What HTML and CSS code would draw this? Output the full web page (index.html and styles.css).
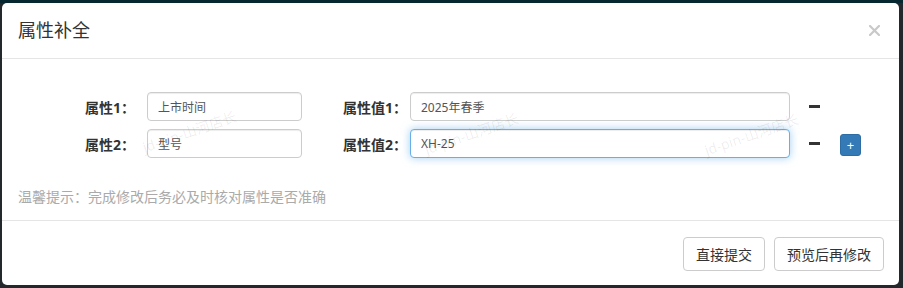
FILE: index.html
```html
<!DOCTYPE html>
<html lang="zh-CN">
<head>
<meta charset="utf-8">
<title>属性补全</title>
<link rel="stylesheet" href="styles.css">
</head>
<body>
<div class="modal">
  <div class="modal-header">
    <h4 class="modal-title">属性补全</h4>
    <button class="close" type="button" aria-label="关闭">
      <svg width="11" height="11" viewBox="0 0 11 11"><path d="M1 1L10 10M10 1L1 10" stroke="#c9c9c9" stroke-width="2.2" stroke-linecap="square"/></svg>
    </button>
  </div>
  <div class="modal-body">
    <div class="rows">
      <div class="row">
        <label class="lbl lbl-key">属性1：</label>
        <input class="input input-key" type="text" value="上市时间">
        <label class="lbl lbl-val">属性值1：</label>
        <input class="input input-val" type="text" value="2025年春季">
        <span class="minus"></span>
      </div>
      <div class="row">
        <label class="lbl lbl-key">属性2：</label>
        <input class="input input-key" type="text" value="型号">
        <label class="lbl lbl-val">属性值2：</label>
        <input class="input input-val focus" type="text" value="XH-25">
        <span class="minus"></span>
        <button class="plus" type="button">+</button>
      </div>
    </div>
    <p class="hint">温馨提示：完成修改后务必及时核对属性是否准确</p>
    <span class="wm wm1">jd-pin-山河店长</span>
    <span class="wm wm2">jd-pin-山河店长</span>
    <span class="wm wm3">jd-pin-山河店长</span>
  </div>
  <div class="modal-footer">
    <button class="btn" type="button">直接提交</button>
    <button class="btn" type="button">预览后再修改</button>
  </div>
</div>
</body>
</html>
```

FILE: styles.css
```css
* { box-sizing: border-box; }
html, body { margin: 0; padding: 0; }
body {
  width: 903px;
  height: 288px;
  overflow: hidden;
  background: linear-gradient(to bottom, #062630 0, #062630 3px, #22282b 3px);
  font-family: "Noto Sans", "Noto Sans CJK SC", sans-serif;
  color: #333;
  padding: 3px 4px 0 2px;
}
.modal {
  width: 897px;
  height: 282px;
  background: #fff;
  border-radius: 5px;
  display: flex;
  flex-direction: column;
  overflow: hidden;
}
.modal-header {
  display: flex;
  align-items: center;
  justify-content: space-between;
  padding: 15px 16px 15px 16px;
  border-bottom: 1px solid #e5e5e5;
}
.modal-title {
  margin: 0;
  font-size: 18px;
  font-weight: 400;
  line-height: 25px;
  color: #333;
}
.close {
  border: 0;
  background: none;
  padding: 0;
  margin-right: 3px;
  display: flex;
  width: 11px;
  height: 11px;
}
.modal-body {
  position: relative;
  flex: 1;
  padding: 33px 16px 0 16px;
}
.rows {
  display: flex;
  flex-direction: column;
  gap: 8px;
}
.row {
  display: flex;
  align-items: center;
  height: 29px;
}
.lbl {
  font-size: 14px;
  font-weight: 700;
  color: #333;
  text-align: right;
}
.lbl-key { width: 129px; padding-right: 12px; }
.lbl-val { width: 108px; padding-right: 3px; }
.input {
  height: 29px;
  border: 1px solid #ccc;
  border-radius: 4px;
  padding: 0 10px;
  font-family: "Noto Sans", "Noto Sans CJK SC", sans-serif;
  font-size: 12px;
  color: #555;
  background: #fff;
  box-shadow: inset 0 1px 1px rgba(0,0,0,.075);
  outline: none;
}
.input-key { width: 155px; }
.input-val { width: 380px; }
.input.focus {
  border-color: #66afe9;
  box-shadow: inset 0 1px 1px rgba(0,0,0,.075), 0 0 8px rgba(102,175,233,.6);
}
.minus {
  width: 11px;
  height: 3px;
  background: #333;
  margin-left: 19px;
}
.plus {
  width: 21px;
  height: 22px;
  margin-left: 20px;
  margin-top: 3px;
  border: 1px solid #2e6da4;
  border-radius: 3px;
  background: #337ab7;
  color: #fff;
  font-size: 13px;
  line-height: 18px;
  padding: 0;
  font-family: "Noto Sans", sans-serif;
}
.hint {
  margin: 29px 0 0 0;
  font-size: 14px;
  line-height: 20px;
  color: #aaa;
}
.wm {
  position: absolute;
  font-size: 14px;
  color: rgba(0,0,0,.075);
  white-space: nowrap;
  transform: rotate(-19deg);
  transform-origin: center;
  pointer-events: none;
}
.wm1 { left: 138px; top: 62px; }
.wm2 { left: 420px; top: 64px; }
.wm3 { left: 700px; top: 65px; }
.modal-footer {
  display: flex;
  justify-content: flex-end;
  gap: 9px;
  padding: 16px 15px 14px 15px;
  border-top: 1px solid #e5e5e5;
}
.btn {
  height: 34px;
  padding: 0 12px;
  border: 1px solid #ccc;
  border-radius: 4px;
  background: #fff;
  color: #333;
  font-size: 14px;
  font-family: "Noto Sans", "Noto Sans CJK SC", sans-serif;
}
```
